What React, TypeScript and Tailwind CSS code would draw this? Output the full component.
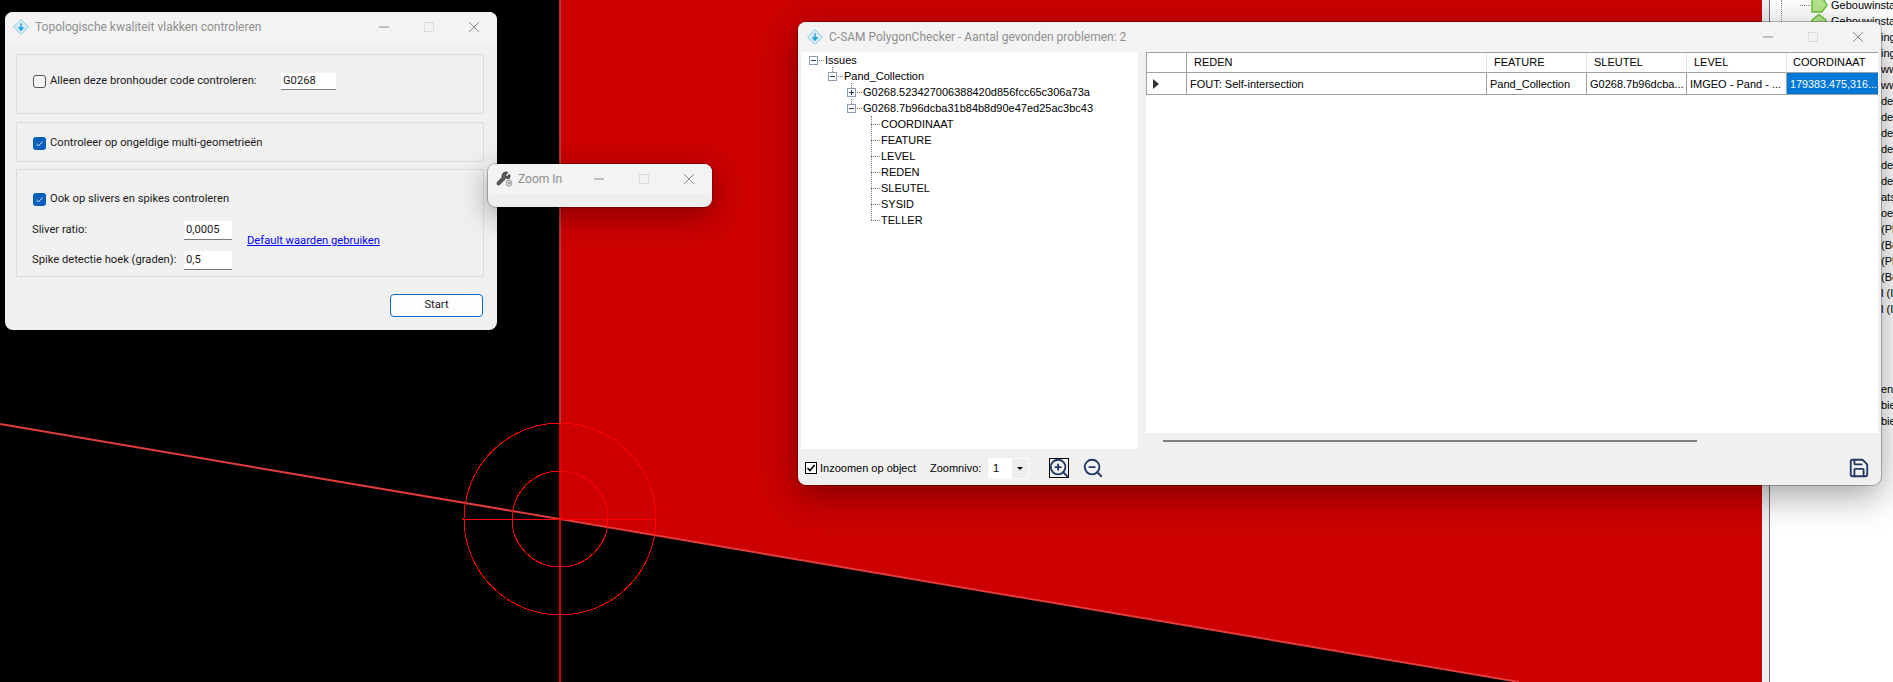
import { Save, Settings, Wrench, ZoomIn, ZoomOut } from "lucide-react";
import type { ReactNode } from "react";

const sideRows = [
  "", "", "ing", "ing", "www", "www", "de", "de", "de", "de", "de", "de", "atse", "oe",
  "(Pl", "(Be", "(Pl", "(Be", "l (I", "l (I", "", "", "", "", "en", "bie", "bie",
];

const leaves = ["COORDINAAT", "FEATURE", "LEVEL", "REDEN", "SLEUTEL", "SYSID", "TELLER"];

const AppIcon = () => (
  <svg width="16" height="16" viewBox="0 0 16 16" fill="none" className="shrink-0">
    <path d="M8 .7 15.3 8 8 15.3.7 8Z" stroke="#6cc7ec" strokeWidth="1" />
    <path d="M8 3.4 12.6 8 8 12.6 3.4 8Z" stroke="#a5def5" strokeWidth="1" />
    <path d="M8 4.5v5M5.6 8 8 11l2.4-3" stroke="#1f9fdc" strokeWidth="1.5" />
  </svg>
);

const TitleControls = () => (
  <div className="ml-auto mr-[18px] flex items-center gap-[35px]">
    <svg width="10" height="10" viewBox="0 0 10 10"><path d="M0 5h10" stroke="#8c8c8c" /></svg>
    <svg width="10" height="10" viewBox="0 0 10 10"><rect x=".5" y=".5" width="9" height="9" fill="none" stroke="#dcdcdc" /></svg>
    <svg width="10" height="10" viewBox="0 0 10 10"><path d="M0 0l10 10M10 0 0 10" stroke="#8c8c8c" /></svg>
  </div>
);

const BlueCheck = () => (
  <span className="flex h-[13px] w-[13px] shrink-0 items-center justify-center rounded-[3px] bg-[#0a5fb8]">
    <svg width="9" height="9" viewBox="0 0 9 9" fill="none"><path d="M1.5 4.8 3.6 6.8 7.6 2.4" stroke="#dcebf8" strokeWidth="1" /></svg>
  </span>
);

const TextBox = ({ value, className }: { value: string; className: string }) => (
  <div className={`flex items-center border-b border-[#7a7a7a] bg-white pl-[2px] ${className}`}>{value}</div>
);

const Expander = ({ open, stem }: { open: boolean; stem?: boolean }) => (
  <span className="relative mr-[1px] flex h-[9px] w-[9px] shrink-0 items-center justify-center border border-[#8b9bb0] bg-white">
    <span className="h-px w-[5px] bg-[#1f3864]" />
    {!open && <span className="absolute h-[5px] w-px bg-[#1f3864]" />}
    {stem && <span className="absolute -top-[6px] left-[3px] h-[5px] border-l border-dotted border-[#777]" />}
  </span>
);

const TreeRow = ({ indent, open, stem, children }: { indent: string; open: boolean; stem?: boolean; children: ReactNode }) => (
  <div className={`flex h-4 items-center whitespace-nowrap ${indent}`}>
    <Expander open={open} stem={stem} />
    <span className="mr-[1px] w-[5px] border-t border-dotted border-[#777]" />
    {children}
  </div>
);

const GridHead = ({ label, pad }: { label: string; pad: string }) => (
  <div className={`flex items-center border-r border-[#e4e4e4] bg-white ${pad}`}>{label}</div>
);

const GridCell = ({ label, active }: { label: string; active?: boolean }) => (
  <div className={`flex items-center overflow-hidden whitespace-nowrap pt-[2px] ${active ? "bg-[#0078d7] pl-[3px] text-[10.8px] text-white" : "border-r border-[#a0a0a0] bg-white pl-[3px]"}`}>
    {label}
  </div>
);

export default function App() {
  return (
    <div className="relative flex h-[682px] w-[1893px] overflow-hidden bg-white font-['Liberation_Sans',sans-serif] text-[11px] text-black">
      {/* map canvas */}
      <svg width="1762" height="682" viewBox="0 0 1762 682" className="shrink-0 bg-black">
        <polygon points="560,0 1762,0 1762,682 1519,682 560,519" fill="#cc0000" />
        <line x1="0" y1="424" x2="1519" y2="682" stroke="#e23c3c" strokeWidth="2" />
        <line x1="560" y1="0" x2="560" y2="423" stroke="#c84444" strokeWidth="1.6" />
        <line x1="560" y1="423" x2="560" y2="682" stroke="#ff0000" strokeWidth="1.6" />
        <line x1="462" y1="519" x2="657" y2="519" stroke="#ff0000" strokeWidth="1" shapeRendering="crispEdges" />
        <circle cx="560" cy="519" r="96" fill="none" stroke="#ff0000" strokeWidth="1" shapeRendering="crispEdges" />
        <circle cx="560" cy="519" r="48" fill="none" stroke="#ff0000" strokeWidth="1" shapeRendering="crispEdges" />
      </svg>
      <div className="w-[7px] shrink-0 bg-[#f0f0f0]" />

      {/* layer tree behind the windows */}
      <div className="relative flex-1 overflow-hidden border-l border-[#707070] bg-white pl-[111px]">
        <div className="absolute left-[11px] top-0 h-full max-h-[440px] border-l border-dotted border-[#888]" />
        <div className="absolute left-[30px] top-[5px] w-[11px] border-t border-dotted border-[#888]" />
        <div className="absolute left-[41px] -top-[3px] flex items-center gap-[3px] whitespace-nowrap">
          <svg width="17" height="16" viewBox="0 0 17 16"><path d="M1 0h10l5 8-5 7H1Z" fill="#b6e58f" stroke="#66c032" strokeWidth="1.4" /></svg>
          Gebouwinsta
        </div>
        <div className="absolute left-[41px] top-[13px] flex items-center gap-[3px] whitespace-nowrap">
          <svg width="17" height="16" viewBox="0 0 17 16"><path d="M8 1.5 15 7v9H1V7Z" fill="#b6e58f" stroke="#66c032" strokeWidth="1.4" /></svg>
          Gebouwinsta
        </div>
        <div className="-mt-[3px] flex flex-col whitespace-nowrap">
          {sideRows.map((row, i) => (
            <div key={i} className="h-4 leading-4">{row}</div>
          ))}
        </div>
      </div>

      {/* Topologische kwaliteit window */}
      <div className="absolute left-[5px] top-[12px] flex h-[318px] w-[492px] flex-col overflow-hidden rounded-[8px] bg-[#f0f0f0] font-['Roboto',sans-serif] text-[11.2px] text-[#1a1a1a]">
        <div className="flex h-[30px] shrink-0 items-center gap-[6px] bg-[#f3f3f3] pl-[8px] text-[12px] text-[#8f8f8f]">
          <AppIcon />
          <span>Topologische kwaliteit vlakken controleren</span>
          <TitleControls />
        </div>
        <div className="ml-[11px] mr-[13px] mt-[12px] h-[60px] border border-[#dcdcdc] pl-[16px] pt-[18px]">
          <div className="flex h-[17px] items-center">
            <span className="h-[13px] w-[13px] shrink-0 rounded-[3px] border border-[#555] bg-[#f6f6f6]" />
            <span className="ml-[4px] w-[231px]">Alleen deze bronhouder code controleren:</span>
            <TextBox value="G0268" className="h-[17px] w-[55px]" />
          </div>
        </div>
        <div className="ml-[11px] mr-[13px] mt-[8px] flex h-[40px] items-center gap-[4px] border border-[#dcdcdc] pl-[16px] pt-[2px]">
          <BlueCheck />
          <span>Controleer op ongeldige multi-geometrieën</span>
        </div>
        <div className="ml-[11px] mr-[13px] mt-[7px] h-[108px] border border-[#dcdcdc] pl-[15px] pt-[23px]">
          <div className="ml-[1px] flex h-[13px] items-center gap-[4px]">
            <BlueCheck />
            <span>Ook op slivers en spikes controleren</span>
          </div>
          <div className="mt-[15px] flex items-center">
            <div className="flex flex-col gap-[11px]">
              <div className="flex h-[19px] items-center">
                <span className="w-[152px]">Sliver ratio:</span>
                <TextBox value="0,0005" className="h-[19px] w-[48px]" />
              </div>
              <div className="flex h-[19px] items-center">
                <span className="w-[152px] whitespace-nowrap">Spike detectie hoek (graden):</span>
                <TextBox value="0,5" className="h-[19px] w-[48px]" />
              </div>
            </div>
            <span className="mb-[9px] ml-[15px] text-[#0000ff] underline">Default waarden gebruiken</span>
          </div>
        </div>
        <div className="mr-[14px] mt-[17px] flex h-[23px] w-[93px] items-center justify-center self-end rounded-[4px] border border-[#0067c0] bg-[#fdfdfd]">
          Start
        </div>
      </div>

      {/* Zoom In window */}
      <div className="absolute left-[488px] top-[164px] flex h-[43px] w-[224px] flex-col overflow-hidden rounded-[8px] bg-[#eeeeee] shadow-[0_0_0_1px_rgba(0,0,0,0.25),0_8px_30px_rgba(0,0,0,0.35)] font-['Roboto',sans-serif]">
        <div className="flex h-[30px] shrink-0 items-center gap-[6px] bg-[#f3f3f3] pl-[8px] text-[12px] text-[#8f8f8f]">
          <span className="relative h-4 w-4 shrink-0">
            <Wrench size={15} strokeWidth={2} className="fill-[#666] text-[#444]" />
            <Settings size={8} strokeWidth={2} className="absolute -right-px bottom-0 bg-[#f3f3f3] text-[#666]" />
          </span>
          <span>Zoom In</span>
          <TitleControls />
        </div>
      </div>

      {/* C-SAM PolygonChecker window */}
      <div className="absolute left-[798px] top-[22px] flex h-[463px] w-[1083px] flex-col overflow-hidden rounded-[8px] bg-[#f0f0f0] shadow-[0_0_0_1px_rgba(0,0,0,0.25),0_10px_36px_rgba(0,0,0,0.38)]">
        <div className="flex h-[30px] shrink-0 items-center gap-[6px] bg-[#f3f3f3] pl-[9px] font-['Roboto',sans-serif] text-[12px] text-[#8f8f8f]">
          <AppIcon />
          <span>C-SAM PolygonChecker - Aantal gevonden problemen: 2</span>
          <TitleControls />
        </div>
        <div className="flex h-[397px] shrink-0 gap-[8px] px-[3px]">
          {/* tree */}
          <div className="w-[337px] shrink-0 bg-white">
            <TreeRow indent="ml-[8px]" open>Issues</TreeRow>
            <TreeRow indent="ml-[27px]" open stem>Pand_Collection</TreeRow>
            <TreeRow indent="ml-[46px]" open={false} stem>G0268.523427006388420d856fcc65c306a73a</TreeRow>
            <TreeRow indent="ml-[46px]" open stem>G0268.7b96dcba31b84b8d90e47ed25ac3bc43</TreeRow>
            <div className="relative ml-[70px]">
              <div className="absolute left-0 top-0 h-[104px] border-l border-dotted border-[#777]" />
              {leaves.map((leaf) => (
                <div key={leaf} className="flex h-4 items-center">
                  <span className="mr-[1px] w-[9px] border-t border-dotted border-[#777]" />
                  {leaf}
                </div>
              ))}
            </div>
          </div>
          {/* data grid */}
          <div className="w-[732px] shrink-0">
            <div className="h-[381px] bg-white">
              <div className="grid grid-cols-[41px_300px_100px_100px_100px_91px] grid-rows-[20px_21px] border-y border-[#a0a0a0] text-[11px]">
                <div className="border-x border-b border-[#a0a0a0] bg-white" />
                <GridHead label="REDEN" pad="pl-[7px] border-b border-b-[#a0a0a0]" />
                <GridHead label="FEATURE" pad="pl-[7px] border-b border-b-[#a0a0a0]" />
                <GridHead label="SLEUTEL" pad="pl-[7px] border-b border-b-[#a0a0a0]" />
                <GridHead label="LEVEL" pad="pl-[7px] border-b border-b-[#a0a0a0]" />
                <GridHead label="COORDINAAT" pad="pl-[6px] border-b border-b-[#a0a0a0] border-r-0" />
                <div className="flex items-center border-x border-[#a0a0a0] bg-white pl-[6px]">
                  <span className="h-0 w-0 border-y-[5px] border-l-[6px] border-y-transparent border-l-[#333]" />
                </div>
                <GridCell label="FOUT: Self-intersection" />
                <GridCell label="Pand_Collection" />
                <GridCell label="G0268.7b96dcba..." />
                <GridCell label="IMGEO - Pand - ..." />
                <GridCell label="179383.475,316..." active />
              </div>
            </div>
            <div className="ml-[17px] mt-[7px] h-[2px] w-[534px] bg-[#808080]" />
          </div>
        </div>
        {/* bottom bar */}
        <div className="flex flex-1 items-center pl-[7px] pt-[2px]">
          <span className="flex h-[12px] w-[12px] items-center justify-center border border-black bg-white">
            <svg width="10" height="10" viewBox="0 0 10 10" fill="none"><path d="M1.5 5 4 7.6 8.6 2" stroke="#000" strokeWidth="1.6" /></svg>
          </span>
          <span className="ml-[3px] w-[110px]">Inzoomen op object</span>
          <span className="w-[58px]">Zoomnivo:</span>
          <div className="flex h-[21px] w-[41px] items-center border border-[#fafafa] bg-white pl-[4px]">
            <span className="w-[20px]">1</span>
            <span className="flex h-full w-[16px] items-center justify-center bg-[#eeeeee]">
              <span className="h-0 w-0 border-x-[3px] border-t-[3px] border-x-transparent border-t-black" />
            </span>
          </div>
          <span className="ml-[20px] flex h-[20px] w-[20px] items-center justify-center border border-black">
            <ZoomIn size={22} strokeWidth={2} className="shrink-0 text-[#1f3864]" />
          </span>
          <ZoomOut size={22} strokeWidth={2} className="ml-[13px] text-[#1f3864]" />
          <Save size={22} strokeWidth={2} className="ml-auto mr-[11px] text-[#1f3864]" />
        </div>
      </div>
    </div>
  );
}
